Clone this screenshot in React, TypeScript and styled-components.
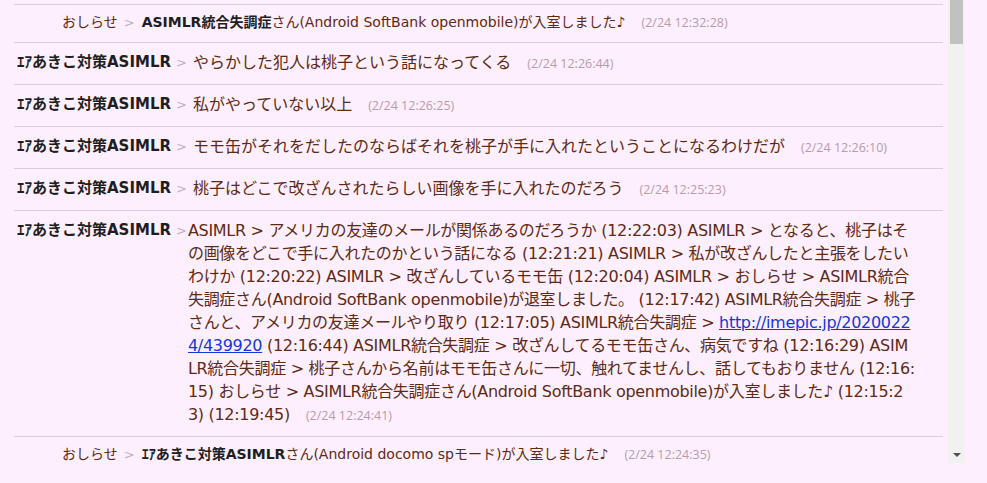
import styled, {createGlobalStyle} from "styled-components";
import {Fragment} from "react";

const GlobalStyle = createGlobalStyle`
  body {
    margin: 0;
    background: #fdeffd;
    font-family: "DejaVu Sans", "Noto Sans CJK JP", sans-serif;
  }
`

type Chat = {
    name: string
    text: string
    stamp: string
}

const LINK = "http://imepic.jp/20200224/439920";

const chats: Chat[] = [
    {name: "ｴｱあきこ対策ASIMLR", text: "やらかした犯人は桃子という話になってくる", stamp: "(2/24 12:26:44)"},
    {name: "ｴｱあきこ対策ASIMLR", text: "私がやっていない以上", stamp: "(2/24 12:26:25)"},
    {name: "ｴｱあきこ対策ASIMLR", text: "モモ缶がそれをだしたのならばそれを桃子が手に入れたということになるわけだが", stamp: "(2/24 12:26:10)"},
    {name: "ｴｱあきこ対策ASIMLR", text: "桃子はどこで改ざんされたらしい画像を手に入れたのだろう", stamp: "(2/24 12:25:23)"},
];

// the log wraps mid-word, so the breaks are kept as they appear
const beforeLink = [
    "ASIMLR > アメリカの友達のメールが関係あるのだろうか (12:22:03) ASIMLR > となると、桃子はそ",
    "の画像をどこで手に入れたのかという話になる (12:21:21) ASIMLR > 私が改ざんしたと主張をしたい",
    "わけか (12:20:22) ASIMLR > 改ざんしているモモ缶 (12:20:04) ASIMLR > おしらせ > ASIMLR統合",
    "失調症さん(Android SoftBank openmobile)が退室しました。 (12:17:42) ASIMLR統合失調症 > 桃子",
];

const afterLink = [
    " (12:16:44) ASIMLR統合失調症 > 改ざんしてるモモ缶さん、病気ですね (12:16:29) ASIM",
    "LR統合失調症 > 桃子さんから名前はモモ缶さんに一切、触れてませんし、話してもおりません (12:16:",
    "15) おしらせ > ASIMLR統合失調症さん(Android SoftBank openmobile)が入室しました♪ (12:15:2",
    "3) (12:19:45)",
];

const App = () => {
    return (
        <>
            <GlobalStyle/>
            <Page>
                <Frame>
                    <Log>
                        <SystemRow>
                            <Notice>おしらせ</Notice>
                            <Sep>&gt;</Sep>
                            <Who>ASIMLR統合失調症</Who>
                            <Notice>さん(Android SoftBank openmobile)が入室しました♪</Notice>
                            <Stamp>(2/24 12:32:28)</Stamp>
                        </SystemRow>

                        {chats.map((c, i) => (
                            <UserRow key={i}>
                                <Name>{c.name}</Name>
                                <Arrow>&gt;</Arrow>
                                <Body $indent={6}>
                                    {c.text}
                                    <Stamp>{c.stamp}</Stamp>
                                </Body>
                            </UserRow>
                        ))}

                        <UserRow>
                            <Name>ｴｱあきこ対策ASIMLR</Name>
                            <Arrow>&gt;</Arrow>
                            <Body $indent={1} $tight>
                                {beforeLink.map((l, i) => (
                                    <Fragment key={i}>{l}<br/></Fragment>
                                ))}
                                さんと、アメリカの友達メールやり取り (12:17:05) ASIMLR統合失調症 &gt;{" "}
                                <Link href={LINK}>http://imepic.jp/2020022<br/>4/439920</Link>
                                {afterLink.map((l, i) => (
                                    <Fragment key={i}>{l}{i < afterLink.length - 1 && <br/>}</Fragment>
                                ))}
                                <Stamp>(2/24 12:24:41)</Stamp>
                            </Body>
                        </UserRow>

                        <SystemRow>
                            <Notice>おしらせ</Notice>
                            <Sep>&gt;</Sep>
                            <Who>ｴｱあきこ対策ASIMLR</Who>
                            <Notice>さん(Android docomo spモード)が入室しました♪</Notice>
                            <Stamp>(2/24 12:24:35)</Stamp>
                        </SystemRow>
                    </Log>
                    <ScrollTrack>
                        <Thumb/>
                        <TrackSpacer/>
                        <DownButton><DownTriangle/></DownButton>
                    </ScrollTrack>
                </Frame>
            </Page>
        </>
    )
}

const Page = styled.div`
  padding-left: 14px;
`

const Frame = styled.div`
  display: flex;
  height: 463px;
  width: 951px;
`

const Log = styled.div`
  flex: 1;
  overflow: hidden;
  padding-top: 4px;
  padding-right: 5px;
`

const SystemRow = styled.div`
  border-top: 1px solid #dccbdc;
  color: #5e2a14;
  font-size: 14px;
  line-height: 19px;
  padding: 8px 0 10px 48px;
  white-space: nowrap;
`

const Notice = styled.span`
  color: #5e2a14;
`

const Sep = styled.span`
  color: #c4aebb;
  font-size: 13px;
  margin: 0 7px 0 6px;
`

const Who = styled.span`
  color: #1e1e1e;
  font-weight: bold;
`

const UserRow = styled.div`
  border-top: 1px solid #dccbdc;
  display: flex;
  align-items: flex-start;
  padding: 8px 0 9px 3px;
`

const Name = styled.span`
  color: #1e1e1e;
  font-size: 15px;
  font-weight: bold;
  line-height: 23px;
  white-space: nowrap;
`

const Arrow = styled.span`
  color: #c4aebb;
  font-size: 13px;
  line-height: 23px;
  margin-left: 5px;
`

const Body = styled.div<{ $indent: number; $tight?: boolean }>`
  color: #5e2a14;
  font-size: 16px;
  letter-spacing: ${p => p.$tight ? "-0.3px" : "normal"};
  line-height: 23px;
  padding-left: ${p => p.$indent}px;
  white-space: nowrap;
`

const Link = styled.a`
  color: #1437d8;
  text-decoration: underline;
`

const Stamp = styled.span`
  color: #b99cab;
  font-family: "Open Sans", sans-serif;
  font-size: 12.5px;
  letter-spacing: normal;
  margin-left: 16px;
`

const ScrollTrack = styled.div`
  background: #f1f1f1;
  display: flex;
  flex-direction: column;
  width: 17px;
`

const Thumb = styled.div`
  background: #c1c1c1;
  height: 44px;
  margin: 0 2px;
`

const TrackSpacer = styled.div`
  flex: 1;
`

const DownButton = styled.div`
  align-items: center;
  display: flex;
  height: 17px;
  justify-content: center;
`

const DownTriangle = styled.div`
  border-left: 4px solid transparent;
  border-right: 4px solid transparent;
  border-top: 4px solid #505050;
  height: 0;
  width: 0;
`

export default App;
